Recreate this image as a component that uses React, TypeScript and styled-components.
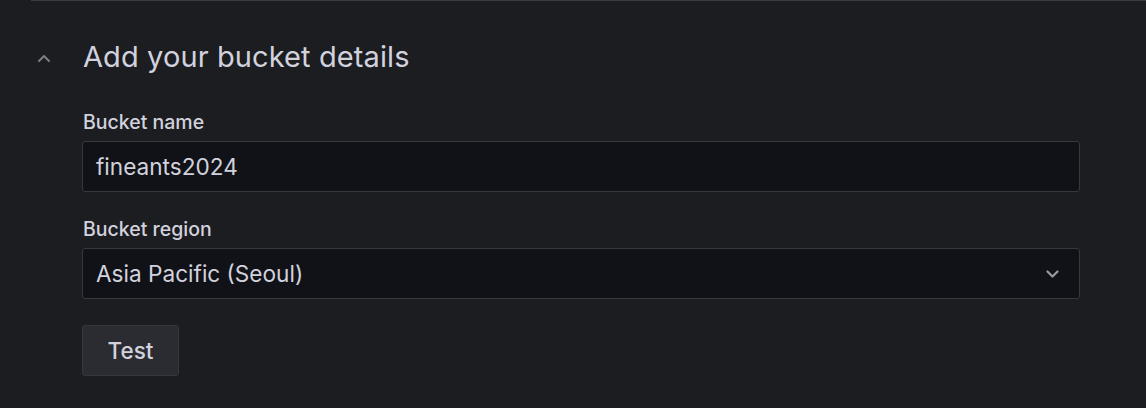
import React from "react";
import styled, { createGlobalStyle } from "styled-components";

const GlobalStyle = createGlobalStyle`
  html, body {
    margin: 0;
    padding: 0;
    background: #1c1d21;
  }
  body {
    font-family: "Inter", "Liberation Sans", sans-serif;
    color: #ccccdc;
  }
`;

function App() {
  return (
    <>
      <GlobalStyle />
      <Page>
        <Section>
          <Header>
            <Toggle aria-label="Collapse">
              <svg width="14" height="9" viewBox="0 0 14 9" fill="none">
                <path
                  d="M2 7l5-5 5 5"
                  stroke="#7d7e88"
                  strokeWidth="2"
                  strokeLinecap="round"
                  strokeLinejoin="round"
                />
              </svg>
            </Toggle>
            <Title>Add your bucket details</Title>
          </Header>
          <Body>
            <Field>
              <Label>Bucket name</Label>
              <InputBox>
                <Value>fineants2024</Value>
              </InputBox>
            </Field>
            <Field>
              <Label>Bucket region</Label>
              <InputBox>
                <Value>Asia Pacific (Seoul)</Value>
                <svg width="13" height="8" viewBox="0 0 13 8" fill="none">
                  <path
                    d="M1.5 1.5l5 5 5-5"
                    stroke="#9a9aa6"
                    strokeWidth="2.2"
                    strokeLinecap="round"
                    strokeLinejoin="round"
                  />
                </svg>
              </InputBox>
            </Field>
            <TestBtn>Test</TestBtn>
          </Body>
        </Section>
      </Page>
    </>
  );
}

export default App;

const Page = styled.div`
  width: 1146px;
  height: 408px;
  background: #1c1d21;
  overflow: hidden;
`;

const Section = styled.div`
  margin-left: 31px;
  border-top: 1px solid #3b3c41;
`;

const Header = styled.div`
  display: flex;
  align-items: center;
  height: 110px;
  margin-top: -1px;
`;

const Toggle = styled.button`
  width: 52px;
  height: 24px;
  display: flex;
  align-items: center;
  justify-content: flex-start;
  padding: 0 0 0 6px;
  box-sizing: border-box;
  border: none;
  background: none;
  margin-top: 6px;
`;

const Title = styled.h3`
  margin: 2px 0 0 0;
  font-size: 29px;
  font-weight: 400;
  color: #d2d2de;
  letter-spacing: 0.1px;
`;

const Body = styled.div`
  padding-left: 51px;
  width: 998px;
  display: flex;
  flex-direction: column;
`;

const Field = styled.div`
  display: flex;
  flex-direction: column;
  margin-bottom: 25px;
`;

const Label = styled.label`
  font-size: 19.5px;
  font-weight: 500;
  line-height: 22px;
  color: #d2d2de;
  margin-top: 1px;
  margin-bottom: 8px;
  padding-left: 1px;
`;

const InputBox = styled.div`
  height: 51px;
  box-sizing: border-box;
  background: #111217;
  border: 1px solid #37383d;
  border-radius: 3px;
  display: flex;
  align-items: center;
  justify-content: space-between;
  padding: 0 20px 0 13px;
`;

const Value = styled.span`
  font-size: 22.6px;
  color: #d2d2de;
`;

const TestBtn = styled.button`
  align-self: flex-start;
  width: 97px;
  height: 51px;
  margin-top: 1px;
  background: #2b2c31;
  border: 1px solid #36373c;
  border-radius: 3px;
  color: #d2d2de;
  font-family: "Inter", "Liberation Sans", sans-serif;
  font-size: 22.5px;
  font-weight: 500;
`;
